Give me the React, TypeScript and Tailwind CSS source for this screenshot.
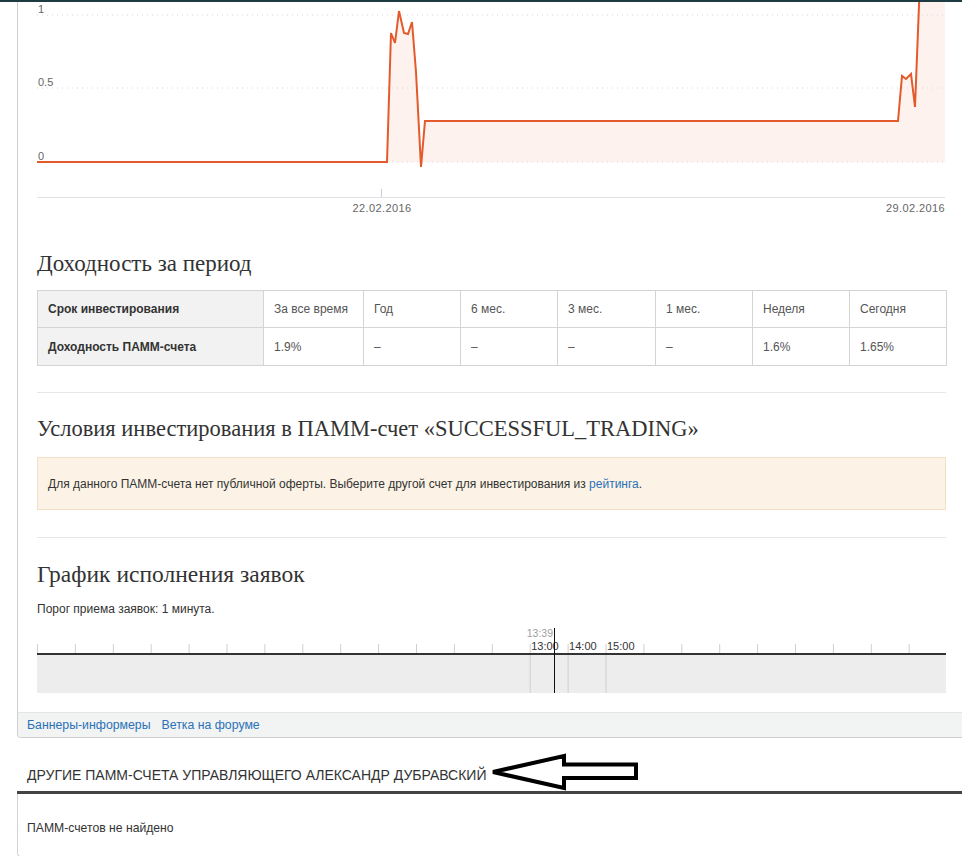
import React from 'react'

const periods = [
  { label: 'За все время', value: '1.9%', w: 'w-[100px]' },
  { label: 'Год', value: '–', w: 'w-[97px]' },
  { label: '6 мес.', value: '–', w: 'w-[97px]' },
  { label: '3 мес.', value: '–', w: 'w-[98px]' },
  { label: '1 мес.', value: '–', w: 'w-[97px]' },
  { label: 'Неделя', value: '1.6%', w: 'w-[97px]' },
  { label: 'Сегодня', value: '1.65%', w: 'w-[97px]' },
]

const linePoints =
  '37,162 387,162 391,33 395,43 399,11 404,33 408,34 412,22 416,72 421,167 425,121 898,121 902,76 906,79 911,74 915,107 920,-20'
const fillPoints =
  '387,162 391,33 395,43 399,11 404,33 408,34 412,22 416,72 421,167 425,121 898,121 902,76 906,79 911,74 915,107 920,-20 945,-20 945,162'

function YieldChart() {
  return (
    <svg width="910" height="230" viewBox="37 2 910 230" className="block">
      <polygon points={fillPoints} fill="#fdf2ee" />
      {[15, 88, 162].map((y) => (
        <line key={y} x1="37" x2="945" y1={y} y2={y} stroke="#d8d8d8" strokeDasharray="1 4" />
      ))}
      <text x="38" y="13" fontSize="11" fill="#666">1</text>
      <text x="38" y="86" fontSize="11" fill="#666">0.5</text>
      <text x="38" y="160" fontSize="11" fill="#666">0</text>
      <polyline points={linePoints} fill="none" stroke="#e35b2c" strokeWidth="2" strokeLinejoin="miter" />
      <line x1="37" x2="945" y1="197.5" y2="197.5" stroke="#dfe1e6" />
      <line x1="381.5" x2="381.5" y1="189" y2="197" stroke="#c8ccd6" />
      <text x="382" y="212" fontSize="11" fill="#666" textAnchor="middle" letterSpacing="0.4">22.02.2016</text>
      <text x="945" y="212" fontSize="11" fill="#666" textAnchor="end" letterSpacing="0.4">29.02.2016</text>
    </svg>
  )
}

function OrderTimeline() {
  const step = 37.9
  const ticks = Array.from({ length: 24 }, (_, i) => i * step)
  return (
    <svg width="910" height="68" viewBox="0 0 910 68" className="block">
      <rect x="0" y="29" width="909" height="38" fill="#ededed" />
      {ticks.map((x, i) => (
        <line
          key={i}
          x1={x + 0.5}
          x2={x + 0.5}
          y1="18"
          y2={i >= 13 && i <= 15 ? 67 : 27}
          stroke="#cfcfcf"
        />
      ))}
      <rect x="0" y="27" width="909" height="2" fill="#333" />
      <text x={13 * step + 1.5} y="24" fontSize="11" fill="#333">13:00</text>
      <text x={14 * step + 1.5} y="24" fontSize="11" fill="#333">14:00</text>
      <text x={15 * step + 1.5} y="24" fontSize="11" fill="#333">15:00</text>
      <text x="516" y="11" fontSize="10.5" fill="#a0a0a0" textAnchor="end">13:39</text>
      <line x1="517.5" x2="517.5" y1="2" y2="67" stroke="#111" />
    </svg>
  )
}

export default function App() {
  return (
    <div className="relative w-[962px] h-[856px] overflow-hidden bg-white font-['Liberation_Sans',Arial,sans-serif] text-[#333]">
      <div className="h-[2px] bg-[#1e3b42]" />

      {/* account panel */}
      <div className="ml-[17px] w-[945px] border-l border-b border-[#cfcfcf] rounded-bl-[4px]">
        <div className="pl-[19px] pr-[16px] pb-[18px]">
          <YieldChart />

          <h2 className="mt-[18px] h-[28px] leading-[28px] text-[23px] text-[#333] font-['Liberation_Serif',Georgia,serif]">
            Доходность за период
          </h2>

          <table className="mt-[12px] w-[909px] border-collapse text-[12px] table-fixed">
            <tbody>
              <tr className="h-[37px]">
                <th className="w-[226px] border border-[#d4d4d4] bg-[#f2f2f2] pl-[10px] text-left font-bold text-[#333]">
                  Срок инвестирования
                </th>
                {periods.map((p) => (
                  <td key={p.label} className={`${p.w} border border-[#d4d4d4] pl-[10px] text-[#555]`}>
                    {p.label}
                  </td>
                ))}
              </tr>
              <tr className="h-[38px]">
                <th className="border border-[#d4d4d4] bg-[#f2f2f2] pl-[10px] text-left font-bold text-[#333]">
                  Доходность ПАММ-счета
                </th>
                {periods.map((p) => (
                  <td key={p.label} className="border border-[#d4d4d4] pl-[10px] text-[#555]">
                    {p.value}
                  </td>
                ))}
              </tr>
            </tbody>
          </table>

          <div className="mt-[26px] h-px bg-[#e6e6e6]" />

          <h2 className="mt-[22px] h-[28px] leading-[28px] text-[22.5px] text-[#333] font-['Liberation_Serif',Georgia,serif]">
            Условия инвестирования в ПАММ-счет «SUCCESSFUL_TRADING»
          </h2>

          <div className="mt-[14px] h-[53px] flex items-center border border-[#f1e0c6] bg-[#fcf3e6] pl-[10px] text-[12px] text-[#333]">
            <span>
              Для данного ПАММ-счета нет публичной оферты. Выберите другой счет для инвестирования из{' '}
              <a className="text-[#2a72b8]">рейтинга</a>.
            </span>
          </div>

          <div className="mt-[27px] h-px bg-[#e6e6e6]" />

          <h2 className="mt-[22px] h-[28px] leading-[28px] text-[23.5px] text-[#333] font-['Liberation_Serif',Georgia,serif]">
            График исполнения заявок
          </h2>

          <p className="mt-[13px] h-[16px] leading-[16px] text-[12px] text-[#333]">Порог приема заявок: 1 минута.</p>

          <div className="mt-[9px]">
            <OrderTimeline />
          </div>
        </div>

        <div className="flex h-[25px] items-center gap-[11px] rounded-bl-[4px] border-t border-[#e4e6e6] bg-[#f2f3f3] pl-[9px] text-[12.3px] text-[#2a72b8]">
          <a>Баннеры-информеры</a>
          <a>Ветка на форуме</a>
        </div>
      </div>

      {/* manager's other accounts */}
      <div className="mt-[16px] ml-[17px] w-[945px]">
        <div className="flex h-[37px] items-center pl-[10px] pt-[5px] text-[14px] uppercase text-[#333]">
          Другие ПАММ-счета управляющего Александр Дубравский
        </div>
        <div className="h-[3px] bg-[#444]" />
        <div className="flex h-[63px] items-center border-l border-b border-[#d4d4d4] rounded-bl-[4px] pl-[9px] pt-[6px] text-[12.2px] text-[#333]">
          ПАММ-счетов не найдено
        </div>
      </div>

      <svg
        className="absolute left-[488px] top-[751px]"
        width="154"
        height="42"
        viewBox="488 751 154 42"
      >
        <polygon
          points="493,772 564,756 564,764.5 636,764.5 636,778 564,778 564,788"
          fill="#fff"
          stroke="#000"
          strokeWidth="4"
          strokeLinejoin="miter"
        />
      </svg>
    </div>
  )
}
